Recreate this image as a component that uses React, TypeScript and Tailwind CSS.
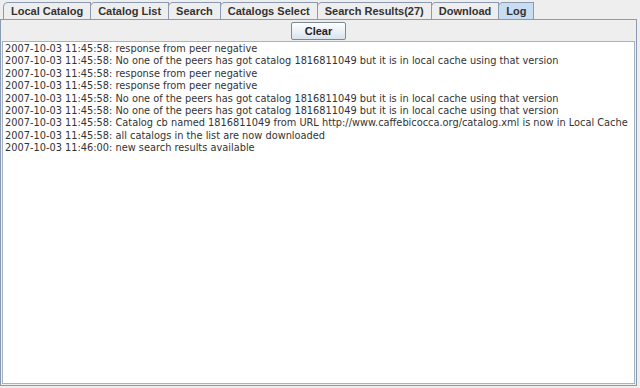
import React from "react";

const tabs = [
  "Local Catalog",
  "Catalog List",
  "Search",
  "Catalogs Select",
  "Search Results(27)",
  "Download",
  "Log",
];

const lines = [
  "2007-10-03 11:45:58: response from peer negative",
  "2007-10-03 11:45:58: No one of the peers has got catalog 1816811049 but it is in local cache using that version",
  "2007-10-03 11:45:58: response from peer negative",
  "2007-10-03 11:45:58: response from peer negative",
  "2007-10-03 11:45:58: No one of the peers has got catalog 1816811049 but it is in local cache using that version",
  "2007-10-03 11:45:58: No one of the peers has got catalog 1816811049 but it is in local cache using that version",
  "2007-10-03 11:45:58: Catalog cb named 1816811049 from URL http://www.caffebicocca.org/catalog.xml is now in Local Cache",
  "2007-10-03 11:45:58: all catalogs in the list are now downloaded",
  "2007-10-03 11:46:00: new search results available",
];

const App = () => {
  return (
    <div
      className="w-[640px] h-[388px] bg-[#eeeeee] flex flex-col overflow-hidden"
      style={{ fontFamily: '"DejaVu Sans", sans-serif' }}
    >
      <div
        className="flex pl-[3px] pt-[2px] h-[19px] shrink-0 items-end"
        style={{ fontFamily: '"Liberation Sans", Arial, sans-serif' }}
      >
        {tabs.map((t) => (
          <div
            key={t}
            className={
              t === "Log"
                ? "h-[17px] px-[7px] flex items-center text-[11px] font-bold text-[#333333] border border-b-0 border-[#8a9bb1] rounded-tl-[5px] bg-[#c8ddf2] -ml-px"
                : "h-[17px] px-[7px] flex items-center text-[11px] font-bold text-[#333333] border border-b-0 border-[#8a9bb1] rounded-tl-[5px] bg-[#eeeeee] -ml-px first:ml-0"
            }
          >
            {t}
          </div>
        ))}
      </div>
      <div className="flex-1 flex flex-col border border-[#8a9bb1] mr-[3px] mb-[2px] ml-0 bg-[#eeeeee]">
        <div className="flex justify-center pt-[2px] pb-[1px]">
          <button
            className="h-[18px] w-[55px] text-[11px] font-bold text-[#222222] border border-[#7a8a99] bg-gradient-to-b from-[#ffffff] to-[#d8e3ee] rounded-[2px]"
            style={{ fontFamily: '"Liberation Sans", Arial, sans-serif' }}
          >
            Clear
          </button>
        </div>
        <div className="flex-1 bg-white border border-[#a5b3c6] mx-[1px] mb-[1px] pt-[1px] pl-[2px]">
          {lines.map((l, i) => (
            <div
              key={i}
              className="text-[9.8px] leading-[12.4px] text-[#333333] whitespace-nowrap"
            >
              {l}
            </div>
          ))}
        </div>
      </div>
    </div>
  );
};

export default App;
